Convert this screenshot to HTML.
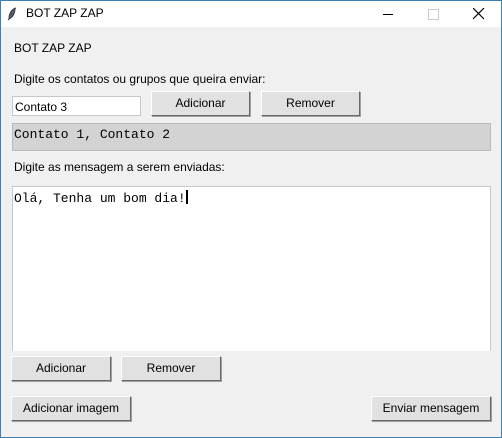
<!DOCTYPE html><html><head><style>
body{margin:0;width:502px;height:438px;overflow:hidden;font-family:"Liberation Sans",sans-serif;font-size:12px;color:#000}
.win{position:absolute;left:0;top:0;width:500px;height:436px;border:1px solid #3c7fb1;background:#f0f0f0}
.tb{position:absolute;left:0;top:0;width:500px;height:26px;background:#fff}
.a{position:absolute}
.btn{position:absolute;background:#e1e1e1;border:1px solid #fff;border-right-color:#696969;border-bottom-color:#696969;box-shadow:1px 1px 0 #a0a0a0;text-align:center;line-height:23px;box-sizing:border-box}
.mono{font-family:"Liberation Mono",monospace;font-size:13px}
</style></head><body><div class="win">
<div class="tb">
<svg class="a" style="left:6px;top:6px" width="10" height="14"><path d="M9 1C5 2 2 6 2 12L1 13M8 2C8 6 6 10 2 12" stroke="#334" fill="#556" stroke-width="1"/></svg>
<div class="a" style="left:25px;top:5px">BOT ZAP ZAP</div>
<div class="a" style="left:382px;top:13px;width:10px;height:1px;background:#000"></div>
<div class="a" style="left:427px;top:8px;width:9px;height:9px;border:1px solid #ccc"></div>
<svg class="a" style="left:472px;top:7px" width="12" height="12"><path d="M0 0L11 11M11 0L0 11" stroke="#000" stroke-width="1.2"/></svg>
</div>
<div class="a" style="left:13px;top:40px">BOT ZAP ZAP</div>
<div class="a" style="left:13px;top:71px">Digite os contatos ou grupos que queira enviar:</div>
<div class="a" style="left:11px;top:95px;width:129px;height:20px;background:#fff;border:1px solid #c8c8c8;box-sizing:border-box;padding:3px 0 0 2px">Contato 3</div>
<div class="btn" style="left:150px;top:90px;width:99px;height:25px">Adicionar</div>
<div class="btn" style="left:260px;top:90px;width:99px;height:25px">Remover</div>
<div class="a mono" style="left:11px;top:122px;width:479px;height:28px;background:#d3d3d3;border:1px solid #bbb;box-sizing:border-box;padding:3px 0 0 1px">Contato 1, Contato 2</div>
<div class="a" style="left:13px;top:159px">Digite as mensagem a serem enviadas:</div>
<div class="a mono" style="left:11px;top:185px;width:479px;height:165px;background:#fff;border:1px solid #c8c8c8;border-bottom:none;box-sizing:border-box;padding:3px 0 0 1px">Olá, Tenha um bom dia!<span style="display:inline-block;width:2px;height:14px;background:#000;vertical-align:-2px"></span></div>
<div class="btn" style="left:10px;top:355px;width:100px;height:25px">Adicionar</div>
<div class="btn" style="left:120px;top:355px;width:100px;height:25px">Remover</div>
<div class="btn" style="left:10px;top:395px;width:120px;height:25px">Adicionar imagem</div>
<div class="btn" style="left:370px;top:395px;width:120px;height:25px">Enviar mensagem</div>
</div></body></html>
